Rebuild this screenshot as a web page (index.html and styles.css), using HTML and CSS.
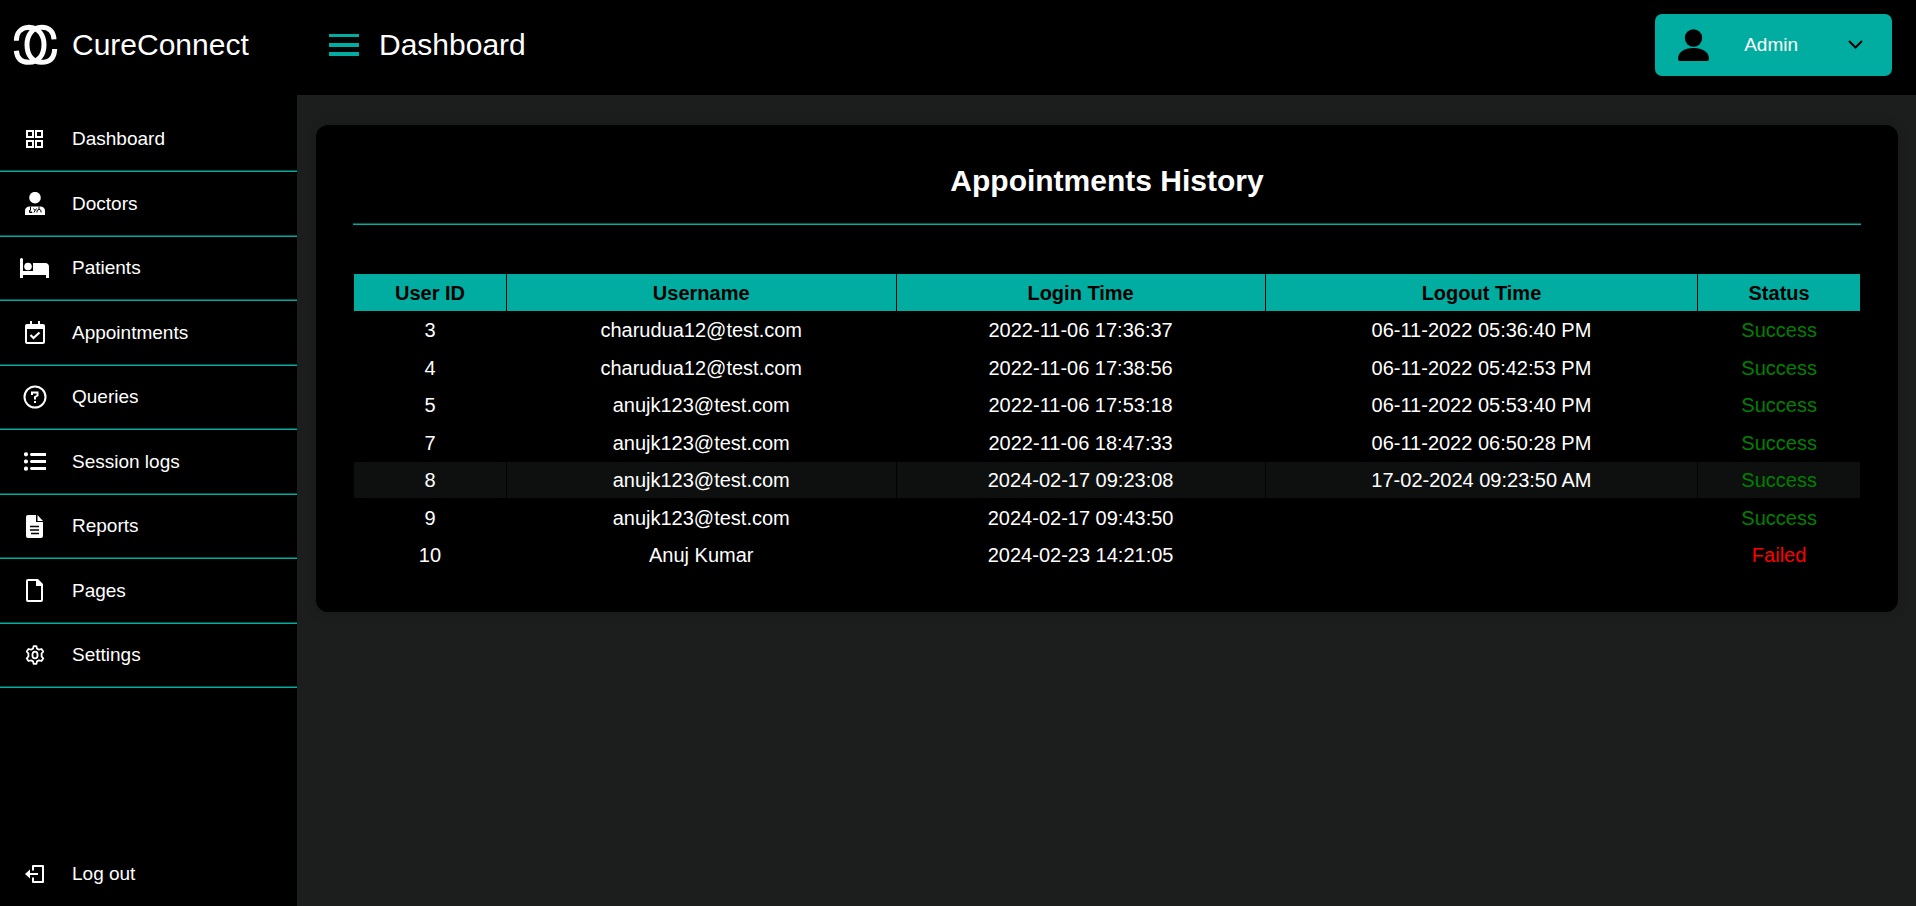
FILE: index.html
```html
<!DOCTYPE html>
<html lang="en">
<head>
<meta charset="utf-8">
<meta name="viewport" content="width=device-width, initial-scale=1">
<title>CureConnect - Dashboard</title>
<link rel="stylesheet" href="styles.css">
</head>
<body>
<div class="app">
  <header class="topbar">
    <a class="brand" href="#">
      <svg class="brand-logo" width="45" height="42" viewBox="0 0 135 126" fill="none" stroke="#fdfdfd" stroke-width="15" aria-hidden="true">
        <path d="M10 50C10 26 24 11 48 10C77 10 93 34 93 62C93 92 77 115 48 115C24 115 12 102 10 80"/>
        <path d="M123 46C122 23 109 10 86 10C58 10 42 34 42 62C42 92 58 115 86 115C112 115 124 101 125 75"/>
      </svg>
      <span>CureConnect</span>
    </a>
    <button class="menu-toggle" type="button" aria-label="Toggle menu">
      <svg width="30" height="22" viewBox="0 0 30 22" fill="currentColor" aria-hidden="true"><path d="M0 0h30v3H0zM0 9h30v4H0zM0 18h30v4H0z"/></svg>
    </button>
    <h1 class="page-title">Dashboard</h1>
    <button class="account" type="button" aria-haspopup="menu">
      <svg width="31" height="32" viewBox="0 0 31 32" fill="currentColor" aria-hidden="true">
        <circle cx="15.500" cy="9" r="8.700"/>
        <path d="M0 30C0 23 6 19 15.500 19S31 23 31 30Q31 32 29 32H2Q0 32 0 30Z"/>
      </svg>
      <span class="account-name">Admin</span>
      <svg class="account-arrow" width="15" height="10" viewBox="0 0 15 10" fill="none" stroke="currentColor" stroke-width="2" aria-hidden="true"><path d="M1 1L7.500 7.500L14 1"/></svg>
    </button>
  </header>

  <nav class="sidebar" aria-label="Main">
    <ul class="nav-list">
      <li><a href="#"><span class="nav-icon"><svg width="17" height="18" viewBox="0 0 17 18" fill="none" stroke="currentColor" stroke-width="2"><path d="M1 1h6v6H1zM10 1h6v6h-6zM1 11h6v6H1zM10 11h6v6h-6z"/></svg></span>Dashboard</a></li>
      <li><a href="#"><span class="nav-icon"><svg width="20" height="23" viewBox="0 0 20 23" fill="currentColor"><circle cx="10" cy="5.700" r="5.800"/><path d="M0 23V19Q0 15 4 14.500H16Q20 15 20 19V23Z"/><path d="M5.500 14.500V18M4.500 18L7 20.500H4.500ZM14 14.500V17M12 20.500V18.500Q14 16 16 18.500V20.500M8.500 16.500L10 18.500L11.500 16.500M9 20.500L10 18.500" fill="none" stroke="#000"/></svg></span>Doctors</a></li>
      <li><a href="#"><span class="nav-icon"><svg width="29" height="20" viewBox="0 0 29 20" fill="currentColor"><path d="M0 1Q1.500-1 3 1V13H13V5H25Q29 5 29 9V20H26V17H3V20H0Z"/><circle cx="8" cy="8.500" r="3.800"/></svg></span>Patients</a></li>
      <li><a href="#"><span class="nav-icon"><svg width="20" height="23" viewBox="0 0 20 23" fill="currentColor"><path fill-rule="evenodd" d="M5 0H7V3H13V0H15V3H18Q20 3 20 5V21Q20 23 18 23H2Q0 23 0 21V5Q0 3 2 3H5ZM2 8V21H18V8Z"/><path d="M5.500 14L8.500 17L14.500 11.500" fill="none" stroke="currentColor" stroke-width="2.200"/></svg></span>Appointments</a></li>
      <li><a href="#"><span class="nav-icon"><svg width="24" height="24" viewBox="0 0 24 24" fill="none" stroke="currentColor" stroke-width="2"><circle cx="12" cy="12" r="10.500"/><path d="M9 10V7.500H14.500V10.500L12 12V14.500M11 17H13"/></svg></span>Queries</a></li>
      <li><a href="#"><span class="nav-icon"><svg width="22" height="19" viewBox="0 0 22 19" fill="currentColor"><circle cx="2" cy="2.300" r="2.100"/><circle cx="2" cy="9.500" r="2.100"/><circle cx="2" cy="16.700" r="2.100"/><path d="M7 1H22V4H7Q5 2.500 7 1ZM7 8H22V11H7Q5 9.500 7 8ZM7 15H22V18H7Q5 16.500 7 15Z"/></svg></span>Session logs</a></li>
      <li><a href="#"><span class="nav-icon"><svg width="17" height="23" viewBox="0 0 17 23" fill="currentColor"><path d="M2 0H10V7H17V21Q17 23 15 23H2Q0 23 0 21V2Q0 0 2 0ZM11.500 0L17 6H11.500Z"/><path d="M4 11.500H13M4 15H13M5 18.500H13" fill="none" stroke="#000" stroke-width="1.400"/></svg></span>Reports</a></li>
      <li><a href="#"><span class="nav-icon"><svg width="17" height="23" viewBox="0 0 17 23" fill="currentColor"><path fill-rule="evenodd" d="M2 0H12L17 5V21Q17 23 15 23H2Q0 23 0 21V2Q0 0 2 0ZM2 2V21H15V7H10V2Z"/></svg></span>Pages</a></li>
      <li><a href="#"><span class="nav-icon"><svg width="20" height="20" viewBox="0 0 20 20" fill="none" stroke="currentColor" stroke-width="1.800" stroke-linejoin="round"><path d="M8.600 1.200H11.400L12 3.600L14 4.700L16.500 4L18.200 6.600L16.600 8.500V11.500L18.200 13.400L16.500 16L14 15.300L12 16.400L11.400 18.800H8.600L8 16.400L6 15.300L3.500 16L1.800 13.400L3.400 11.500V8.500L1.800 6.600L3.500 4L6 4.700L8 3.600Z"/><ellipse cx="10" cy="10" rx="2.600" ry="3.400"/></svg></span>Settings</a></li>
    </ul>
    <a class="logout" href="#"><span class="nav-icon"><svg width="19" height="18" viewBox="0 0 19 18" fill="none" stroke="currentColor" stroke-width="2" stroke-linejoin="round"><path d="M8 5.500V1H18V17H8V12.500M13 9H3"/><path d="M0 9L5 4.500V13.500Z" fill="currentColor" stroke="none"/></svg></span>Log out</a>
  </nav>

  <main class="content">
    <section class="card">
      <h2 class="card-title">Appointments History</h2>
      <table class="history">
        <colgroup><col class="col-id"><col class="col-user"><col class="col-login"><col class="col-logout"><col class="col-status"></colgroup>
        <thead>
          <tr><th scope="col">User ID</th><th scope="col">Username</th><th scope="col">Login Time</th><th scope="col">Logout Time</th><th scope="col">Status</th></tr>
        </thead>
        <tbody>
          <tr><td>3</td><td>charudua12@test.com</td><td>2022-11-06 17:36:37</td><td>06-11-2022 05:36:40 PM</td><td class="success">Success</td></tr>
          <tr><td>4</td><td>charudua12@test.com</td><td>2022-11-06 17:38:56</td><td>06-11-2022 05:42:53 PM</td><td class="success">Success</td></tr>
          <tr><td>5</td><td>anujk123@test.com</td><td>2022-11-06 17:53:18</td><td>06-11-2022 05:53:40 PM</td><td class="success">Success</td></tr>
          <tr><td>7</td><td>anujk123@test.com</td><td>2022-11-06 18:47:33</td><td>06-11-2022 06:50:28 PM</td><td class="success">Success</td></tr>
          <tr class="highlight"><td>8</td><td>anujk123@test.com</td><td>2024-02-17 09:23:08</td><td>17-02-2024 09:23:50 AM</td><td class="success">Success</td></tr>
          <tr><td>9</td><td>anujk123@test.com</td><td>2024-02-17 09:43:50</td><td></td><td class="success">Success</td></tr>
          <tr><td>10</td><td>Anuj Kumar</td><td>2024-02-23 14:21:05</td><td></td><td class="failed">Failed</td></tr>
        </tbody>
      </table>
    </section>
  </main>
</div>
</body>
</html>
```
FILE: styles.css
```css
:root {
  --accent: #00ada0;
  --accent-dark: #00564f;
  --surface: #000;
  --page: #1c1e1d;
}

* {
  box-sizing: border-box;
}

body {
  margin: 0;
  background: var(--page);
  color: #fff;
  font-family: "Liberation Sans", Arial, sans-serif;
  font-size: 19px;
}

a {
  color: inherit;
  text-decoration: none;
}

button {
  border: 0;
  background: none;
  padding: 0;
  font: inherit;
  cursor: pointer;
}

svg {
  display: block;
  flex: none;
}

.app {
  display: grid;
  grid-template-columns: 297px 1fr;
  grid-template-rows: auto 1fr;
  min-height: 100vh;
}

/* Top bar */
.topbar {
  grid-column: 1 / -1;
  display: flex;
  align-items: center;
  padding: 14px 24px 19px 0;
  background: var(--surface);
}

.brand {
  display: flex;
  align-items: center;
  gap: 14px;
  width: 329px;
  padding-left: 13px;
  font-size: 30px;
}

.menu-toggle {
  color: var(--accent);
}

.page-title {
  margin: 0 auto 0 20px;
  font-size: 30px;
  font-weight: normal;
}

.account {
  display: flex;
  align-items: center;
  gap: 35px;
  padding: 15px 29px 15px 23px;
  border-radius: 7px;
  background: var(--accent);
  color: #000;
}

.account-name {
  color: #fff;
}

.account-arrow {
  margin-left: 15px;
}

/* Sidebar */
.sidebar {
  display: flex;
  flex-direction: column;
  padding-top: 12px;
  background: var(--surface);
}

.nav-list {
  margin: 0;
  padding: 0;
  list-style: none;
}

.nav-list a,
.logout {
  display: flex;
  align-items: center;
  gap: 23px;
  height: 64px;
  padding-left: 20px;
}

.nav-list a {
  padding-bottom: 1px;
  border-bottom: 1px solid var(--accent);
  box-shadow: inset 0 -1px var(--accent-dark);
}

.nav-list li:first-child a,
.nav-list li:nth-child(even) a {
  height: 65px;
}

.nav-icon {
  display: flex;
  justify-content: center;
  width: 29px;
}

.logout {
  margin-top: auto;
}

/* Card */
.content {
  padding: 30px 18px 30px 19px;
}

.card {
  padding: 37px 37px 38px;
  border-radius: 12px;
  background: var(--surface);
  box-shadow: 0 0 12px rgba(0, 0, 0, 0.2);
}

.card-title {
  margin: 0 0 48px;
  padding-bottom: 24px;
  border-bottom: 1px solid var(--accent);
  box-shadow: inset 0 -1px var(--accent-dark);
  font-size: 30px;
  line-height: 38px;
  text-align: center;
}

.history {
  width: 100%;
  border-collapse: collapse;
  table-layout: fixed;
  font-size: 20px;
  line-height: 22px;
  text-align: center;
}

.history th,
.history td {
  height: 37px;
  padding: 7px;
  border: 1px solid #000;
}

.history th {
  height: 38px;
  background: var(--accent);
  color: #000;
}

.history tbody tr:nth-child(even) td {
  height: 38px;
}

.history .highlight td {
  background: #0e100f;
}

.history .success {
  color: #008000;
}

.history .failed {
  color: #f00;
}

.col-id { width: 10.15%; }
.col-user { width: 25.85%; }
.col-login { width: 24.5%; }
.col-logout { width: 28.7%; }
.col-status { width: 10.8%; }
```
